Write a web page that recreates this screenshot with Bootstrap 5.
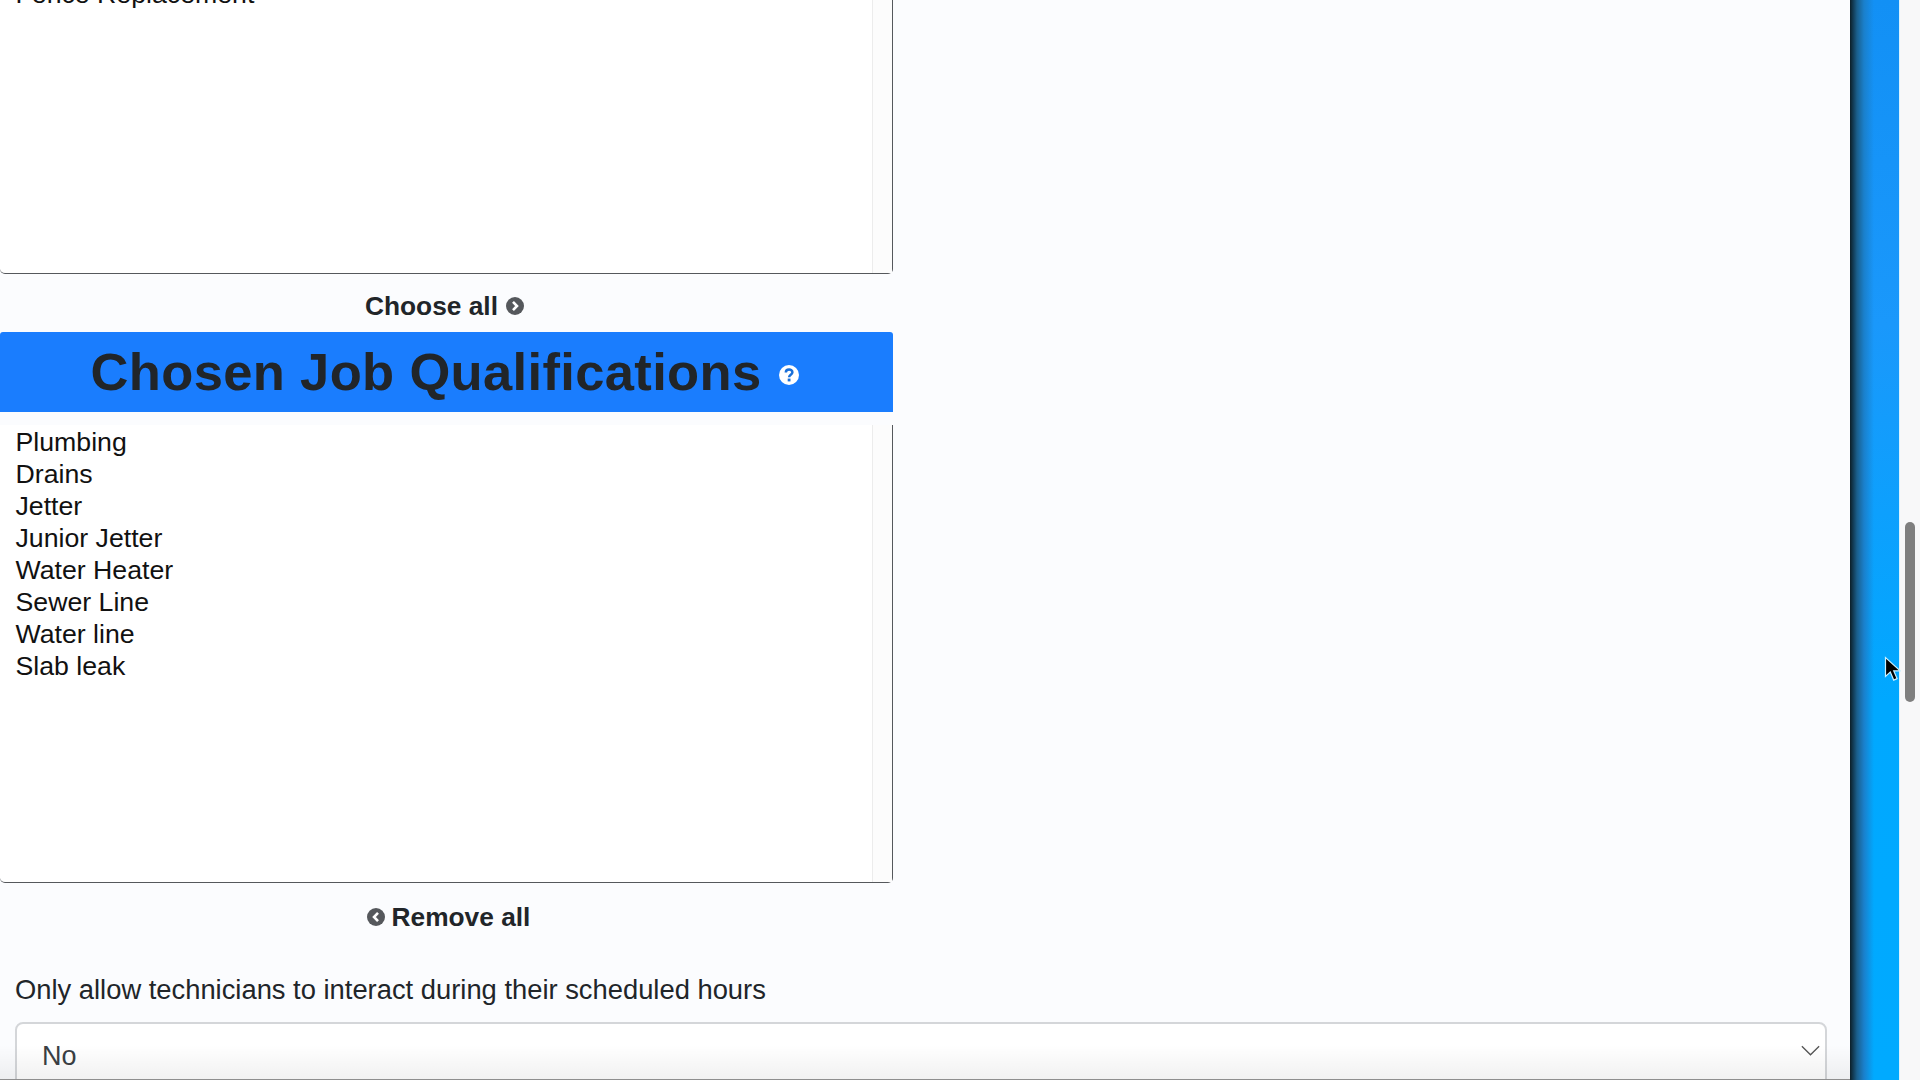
<!DOCTYPE html>
<html lang="en">
<head>
<meta charset="utf-8">
<title>Job Qualifications</title>
<link href="https://cdn.jsdelivr.net/npm/bootstrap@5.3.0/dist/css/bootstrap.min.css" rel="stylesheet">
<style>
html,body{height:1080px;overflow:hidden;background:#fbfcfe}
body{font-family:"Liberation Sans",Arial,sans-serif;color:#212529}
.shell{height:1080px;position:relative}
.pagebody{flex:0 0 1850px;min-width:0;height:1080px;overflow:hidden;position:relative;background:#fbfcfe;border-bottom:1px solid #8e8e8e}
.pagebody::after{content:"";position:absolute;left:0;right:0;bottom:0;height:34px;background:linear-gradient(rgba(0,0,0,0),rgba(0,0,0,.055));pointer-events:none}
.picker{width:893px}
.pickbox{background:#fff;border-right:1px solid #55585c;border-bottom:1px solid #55585c;border-bottom-left-radius:5px;border-bottom-right-radius:5px;font-size:26.7px;line-height:32px;color:#111}
.pickbox-top{height:297px;margin-top:-23px}
.pickbox-main{height:458px;margin-top:13px}
.pickitems{padding:1px 15px 0 15.5px}
.pickgutter{flex:0 0 20px;background:#fcfcfc;border-left:1px solid #ececec}
.mover{font-weight:700;font-size:26.3px;line-height:32px}
.mover-choose{height:58px;padding:6px 4px 0 0}
.mover-remove{height:68px;padding-left:4px}
.mover svg{width:18px;height:18px;flex:none}
.mover-remove svg{margin-right:3px}
.titlebar{height:80px;background:#1a7dfe;border-radius:3px 3px 0 0;padding-right:3px}
.titlebar h2{font-size:52.5px;font-weight:700;line-height:1;letter-spacing:.35px;margin:0;color:#212529}
.titlebar svg{width:20px;height:20px;flex:none;margin-top:5px;margin-left:2px}
.fieldwrap{padding:0 23px 0 15px}
.fieldlabel{font-size:27.35px;line-height:32px;margin:23px 0 16px;display:block;font-weight:400}
.fieldselect{height:67px;font-size:27px;padding:11px 40px 10px 25px;border-radius:8px;border:2px solid #d4d6d9;color:#3a3f44;background-color:#fff;background-image:url("data:image/svg+xml,%3csvg xmlns='http://www.w3.org/2000/svg' viewBox='0 0 16 16'%3e%3cpath fill='none' stroke='%23555' stroke-width='.9' d='M2 5l6 6 6-6'/%3e%3c/svg%3e");background-size:23px 23px;background-position:right 3px top 15px;font-family:inherit}
.bluestrip{flex:0 0 50px;height:1080px;border-right:1px solid #d8f2ff;background:linear-gradient(90deg,#0c1f28 0,#1a5f8c 7px,#1a80cc 14px,rgba(20,140,240,0) 24px),linear-gradient(180deg,#1290f5 0,#1a98fb 30%,#00a8ff 65%,#00aaff 100%)}
.railtrack{flex:0 0 20px;height:1080px;background:#f8f8f9;padding:522px 5px 0}
.railthumb{height:180px;background:#7f7f7f;border-radius:6px}
.arrowptr{position:absolute;left:1884px;top:656px;width:17px;height:26px}
</style>
</head>
<body>
<div class="shell d-flex">
  <main class="pagebody">
    <div class="picker">
      <div class="pickbox pickbox-top d-flex">
        <div class="pickitems flex-grow-1"><div>Fence Replacement</div></div>
        <div class="pickgutter"></div>
      </div>
      <div class="mover mover-choose d-flex align-items-center justify-content-center gap-2">
        <span>Choose all</span>
        <svg viewBox="0 0 18 18"><circle cx="9" cy="9" r="9" fill="#55585c"/><path d="M7 4.8 11 9l-4 4.2" fill="none" stroke="#fff" stroke-width="2.6"/></svg>
      </div>
      <div class="titlebar d-flex align-items-center justify-content-center gap-3">
        <h2>Chosen Job Qualifications</h2>
        <svg viewBox="0 0 20 20"><circle cx="10" cy="10" r="10" fill="#fff"/><path d="M6.8 7.6c0-4.2 6.6-4 6.6-.3 0 2.600-3.300 2.400-3.300 5" fill="none" stroke="#1a6fd8" stroke-width="2.500"/><rect x="8.700" y="13.600" width="2.800" height="2.800" fill="#1a6fd8"/></svg>
      </div>
      <div class="pickbox pickbox-main d-flex">
        <div class="pickitems flex-grow-1">
          <div>Plumbing</div><div>Drains</div><div>Jetter</div><div>Junior Jetter</div><div>Water Heater</div><div>Sewer Line</div><div>Water line</div><div>Slab leak</div>
        </div>
        <div class="pickgutter"></div>
      </div>
      <div class="mover mover-remove d-flex align-items-center justify-content-center gap-1">
        <svg viewBox="0 0 18 18"><circle cx="9" cy="9" r="9" fill="#55585c"/><path d="M11 4.800 7 9l4 4.200" fill="none" stroke="#fff" stroke-width="2.600"/></svg>
        <span>Remove all</span>
      </div>
    </div>
    <div class="fieldwrap">
      <label class="fieldlabel form-label" for="sched">Only allow technicians to interact during their scheduled hours</label>
      <select id="sched" class="form-select fieldselect"><option>No</option><option>Yes</option></select>
    </div>
  </main>
  <div class="bluestrip"></div>
  <div class="railtrack"><div class="railthumb"></div></div>
  <svg class="arrowptr" viewBox="0 0 17 26"><path d="M1.500 1.500v19l4.800-4.400 3.400 8 3.400-1.500-3.400-7.800h6.500z" fill="#000" stroke="#c8f0ff" stroke-width="1.200"/></svg>
</div>
</body>
</html>
